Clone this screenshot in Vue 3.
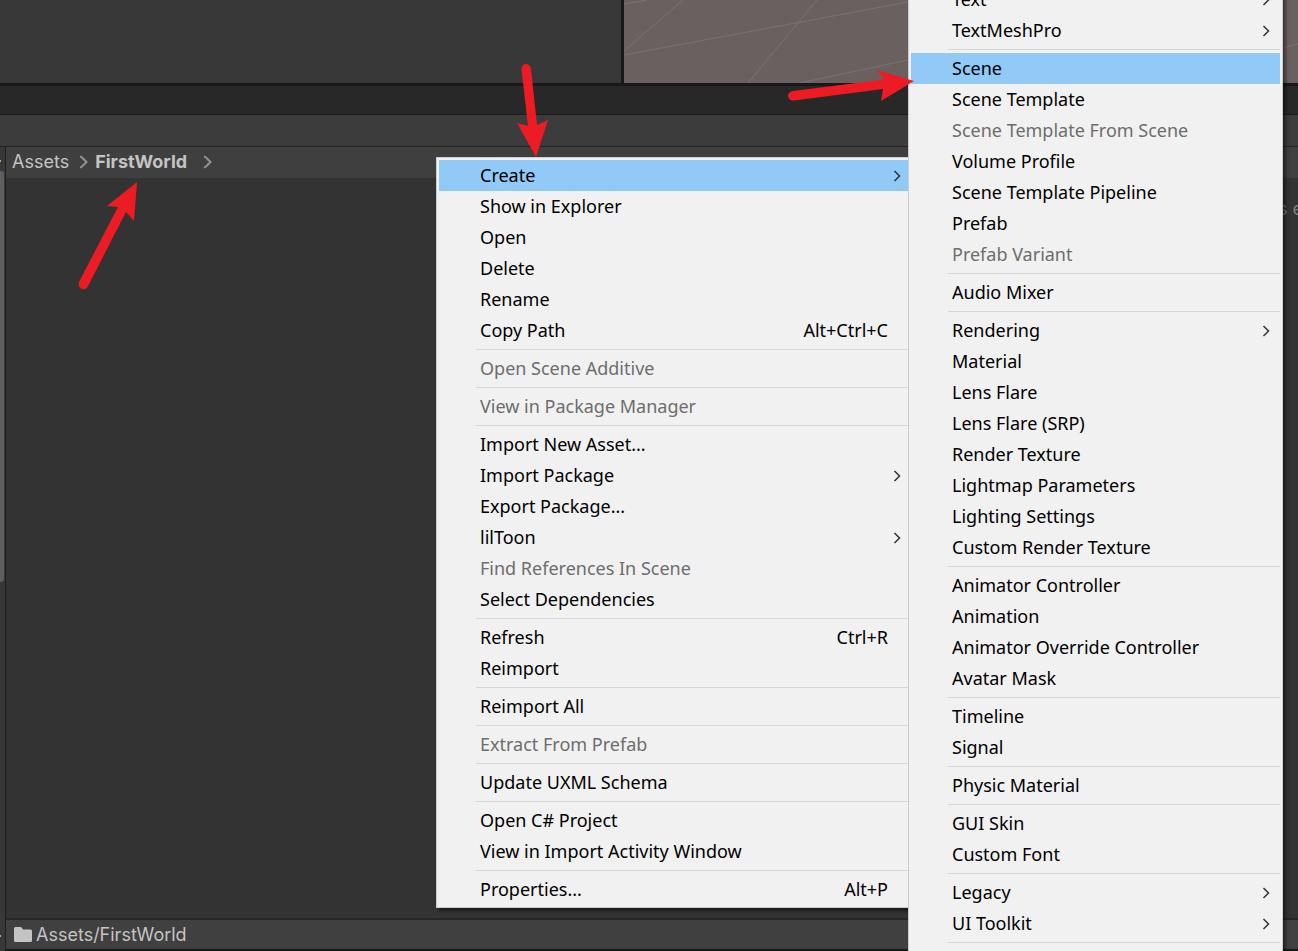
<script setup>
const sep = { sep: true }
const assetMenu = [
  { label: 'Create', sub: true, active: true },
  { label: 'Show in Explorer' },
  { label: 'Open' },
  { label: 'Delete' },
  { label: 'Rename' },
  { label: 'Copy Path', keys: 'Alt+Ctrl+C' },
  sep,
  { label: 'Open Scene Additive', disabled: true },
  sep,
  { label: 'View in Package Manager', disabled: true },
  sep,
  { label: 'Import New Asset...' },
  { label: 'Import Package', sub: true },
  { label: 'Export Package...' },
  { label: 'lilToon', sub: true },
  { label: 'Find References In Scene', disabled: true },
  { label: 'Select Dependencies' },
  sep,
  { label: 'Refresh', keys: 'Ctrl+R' },
  { label: 'Reimport' },
  sep,
  { label: 'Reimport All' },
  sep,
  { label: 'Extract From Prefab', disabled: true },
  sep,
  { label: 'Update UXML Schema' },
  sep,
  { label: 'Open C# Project' },
  { label: 'View in Import Activity Window' },
  sep,
  { label: 'Properties...', keys: 'Alt+P' }
]
const createMenu = [
  { label: 'Text', sub: true },
  { label: 'TextMeshPro', sub: true },
  sep,
  { label: 'Scene', active: true },
  { label: 'Scene Template' },
  { label: 'Scene Template From Scene', disabled: true },
  { label: 'Volume Profile' },
  { label: 'Scene Template Pipeline' },
  { label: 'Prefab' },
  { label: 'Prefab Variant', disabled: true },
  sep,
  { label: 'Audio Mixer' },
  sep,
  { label: 'Rendering', sub: true },
  { label: 'Material' },
  { label: 'Lens Flare' },
  { label: 'Lens Flare (SRP)' },
  { label: 'Render Texture' },
  { label: 'Lightmap Parameters' },
  { label: 'Lighting Settings' },
  { label: 'Custom Render Texture' },
  sep,
  { label: 'Animator Controller' },
  { label: 'Animation' },
  { label: 'Animator Override Controller' },
  { label: 'Avatar Mask' },
  sep,
  { label: 'Timeline' },
  { label: 'Signal' },
  sep,
  { label: 'Physic Material' },
  sep,
  { label: 'GUI Skin' },
  { label: 'Custom Font' },
  sep,
  { label: 'Legacy', sub: true },
  { label: 'UI Toolkit', sub: true },
  sep
]
const menus = [
  { name: 'asset', title: 'Asset', items: assetMenu },
  { name: 'create', title: 'Create', items: createMenu }
]
</script>

<template>
  <div class="editor">
    <div class="upper">
      <div class="hierarchy"></div>
      <div class="scene">
        <svg width="674" height="83" viewBox="0 0 674 83" fill="none" stroke="#7a7171" aria-hidden="true">
          <path d="M0 4 23 0M0 51 59 0M0 55 284 2M124 83 193 0M176 83 284 60M659 48 674 44" />
        </svg>
      </div>
    </div>
    <div class="tabs"></div>
    <div class="toolbar"></div>
    <main class="project">
      <aside class="tree">
        <span class="tick"></span>
        <span class="thumb"></span>
        <span class="tick low"></span>
      </aside>
      <section class="content">
        <nav class="crumbs" aria-label="Folder path">
          <a href="#assets">Assets</a>
          <svg width="9" height="14" viewBox="0 0 9 14" aria-hidden="true"><path d="M1 1.500Q3 2 4 3.500L7.500 7 4 10.500Q3 12 1 12.500" /></svg>
          <a href="#firstworld" class="current">FirstWorld</a>
          <svg width="9" height="14" viewBox="0 0 9 14" aria-hidden="true"><path d="M1 1.500Q3 2 4 3.500L7.500 7 4 10.500Q3 12 1 12.500" /></svg>
        </nav>
        <div class="files"><span>s e</span></div>
        <footer class="status">
          <svg width="18" height="15" viewBox="0 0 18 15" aria-hidden="true"><path d="M0 1.500Q0 0 1.500 0H6.500Q7.500 0 8 1L9 2.500H16.500Q18 2.500 18 4V13.500Q18 15 16.500 15H1.500Q0 15 0 13.500Z" fill="#c4c4c4" /></svg>
          <span>Assets/FirstWorld</span>
        </footer>
      </section>
    </main>

    <div v-for="menu in menus" :key="menu.name" class="menu" :class="menu.name" role="menu" :aria-label="menu.title">
      <template v-for="(item, i) in menu.items" :key="i">
        <div v-if="item.sep" class="sep" role="separator"></div>
        <button v-else type="button" class="item" :class="{ active: item.active }" :disabled="item.disabled" role="menuitem">
          <span class="label">{{ item.label }}</span>
          <span v-if="item.keys" class="keys">{{ item.keys }}</span>
          <svg v-if="item.sub" class="arrow" width="8" height="12" viewBox="0 0 8 12" aria-hidden="true"><path d="M1.500 1 6.500 6 1.500 11" /></svg>
        </button>
      </template>
    </div>

    <svg class="marks" width="920" height="300" viewBox="0 0 920 300" aria-hidden="true">
      <g fill="#ed1c24">
        <path d="M137 182 107 206 118 207 79 282Q78 287 82 289 86 290 88 286L126 212 134 221Z" />
        <path d="M536 157 517 123 528 126 521.500 69Q522 64 526 64 530 64 531 69L537 125 548 120Z" />
        <path d="M914 81 877 70 884 79.500 793 91Q788 92 788 96 789 101 794 100.500L883 89 881 101Z" />
      </g>
    </svg>
  </div>
</template>

<style>
body { margin: 0; background: #333; }
</style>

<style scoped>
.editor {
  position: relative;
  display: flex;
  flex-direction: column;
  height: 100vh;
  overflow: hidden;
  background: #191919;
  font: 18px/24px Inter, sans-serif;
  color: #c4c4c4;
}
.upper { display: flex; flex: none; height: 83px; border-bottom: 3px solid #191919; }
.hierarchy { width: 621px; flex: none; background: #383838; border-right: 3px solid #191919; }
.scene { flex: 1; min-width: 0; overflow: hidden; background: #6a6060; }
.scene svg { display: block; }
.tabs { flex: none; height: 28px; background: #282828; border-bottom: 1px solid #1c1c1c; }
.toolbar { flex: none; height: 31px; background: #3c3c3c; border-bottom: 1px solid #232323; }
.project { display: flex; flex: 1; min-height: 0; }
.tree { display: flex; flex-direction: column; width: 5px; flex: none; background: #383838; border-right: 1px solid #1e1e1e; overflow: hidden; }
.tick { width: 1px; height: 2px; margin-top: 13px; background: #a8a8a8; flex: none; }
.tick.low { margin-top: auto; margin-bottom: 14px; }
.thumb { width: 4px; height: 411px; flex: none; margin-top: 9px; background: #5f5f5f; border-radius: 0 4px 6px 0; }
.content { display: flex; flex: 1; min-width: 0; flex-direction: column; }
.crumbs { display: flex; align-items: center; box-sizing: border-box; height: 31px; flex: none; padding: 0 6px 2px; background: #3f3f3f; }
.crumbs a { color: #c4c4c4; text-decoration: none; }
.crumbs svg { margin: 0 7px 0 10px; fill: none; stroke: #929292; stroke-width: 2; }
.crumbs .current { margin-right: 6px; font-weight: 700; }
.files { display: flex; justify-content: flex-end; flex: 1; padding-top: 19px; background: #333; color: #7c7c7c; }
.files span { width: 20px; white-space: nowrap; }
.status { display: flex; align-items: center; gap: 4px; height: 29px; flex: none; padding: 0 8px; background: #404040; border-top: 2px solid #262626; border-bottom: 2px solid #191919; }

.menu {
  position: absolute;
  box-sizing: border-box;
  padding: 2px;
  background: #f1f1f1;
  border: 1px solid #ccc;
  box-shadow: 3px 3px 3px rgba(0, 0, 0, 0.45);
  font: 18px/31px "Noto Sans", sans-serif;
}
.menu.asset { left: 436px; top: 157px; width: 478px; }
.menu.create { left: 908px; top: -19px; width: 375px; bottom: -19px; }
.item {
  display: flex;
  align-items: center;
  width: 100%;
  height: 31px;
  padding: 0 10px 0 41px;
  border: 0;
  background: none;
  color: #000;
  font: inherit;
  text-align: left;
  white-space: nowrap;
}
.item.active { background: #91c9f7; }
.item:disabled { color: #6d6d6d; }
.label { flex: 1; }
.keys { margin-right: 13px; }
.arrow { fill: none; stroke: #333; stroke-width: 1.500; }
.sep { height: 1px; margin: 3px 0 3px 37px; background: #d7d7d7; }
.marks { position: absolute; left: 0; top: 0; pointer-events: none; }
</style>
